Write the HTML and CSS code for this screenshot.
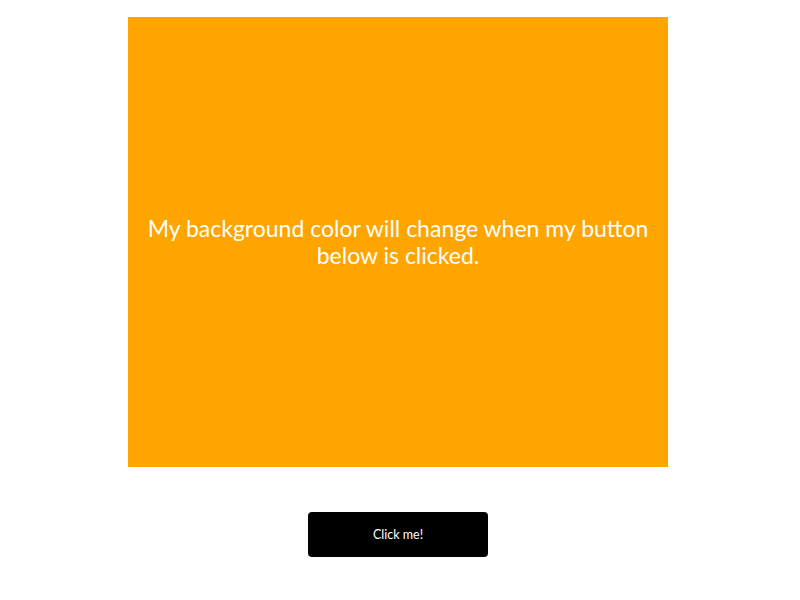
FILE: index.html
```html
<!DOCTYPE html>
<html>
<head>
<meta charset="utf-8">
<link rel="stylesheet" href="styles.css">
</head>
<body>
<div class="page">
  <div class="box">
    <p class="msg">My background color will change when my button below is clicked.</p>
  </div>
  <button class="btn">Click me!</button>
</div>
</body>
</html>
```
FILE: styles.css
```css
html, body {
  margin: 0;
  padding: 0;
  background: #ffffff;
}
.page {
  display: flex;
  flex-direction: column;
  align-items: center;
  padding: 17px 4px 0 0;
  font-family: "Trebuchet MS", Lato, "Liberation Sans", sans-serif;
}
.box {
  width: 540px;
  height: 450px;
  background: #ffa500;
  display: flex;
  align-items: center;
  justify-content: center;
  box-sizing: border-box;
  padding: 0 10px;
}
.msg {
  margin: 0;
  color: #ffffff;
  font-size: 23px;
  line-height: 27px;
  text-align: center;
}
.btn {
  margin-top: 45px;
  width: 180px;
  height: 45px;
  background: #000000;
  color: #ffffff;
  border: none;
  border-radius: 4px;
  font-family: inherit;
  font-size: 12.5px;
  padding: 0;
}
```
